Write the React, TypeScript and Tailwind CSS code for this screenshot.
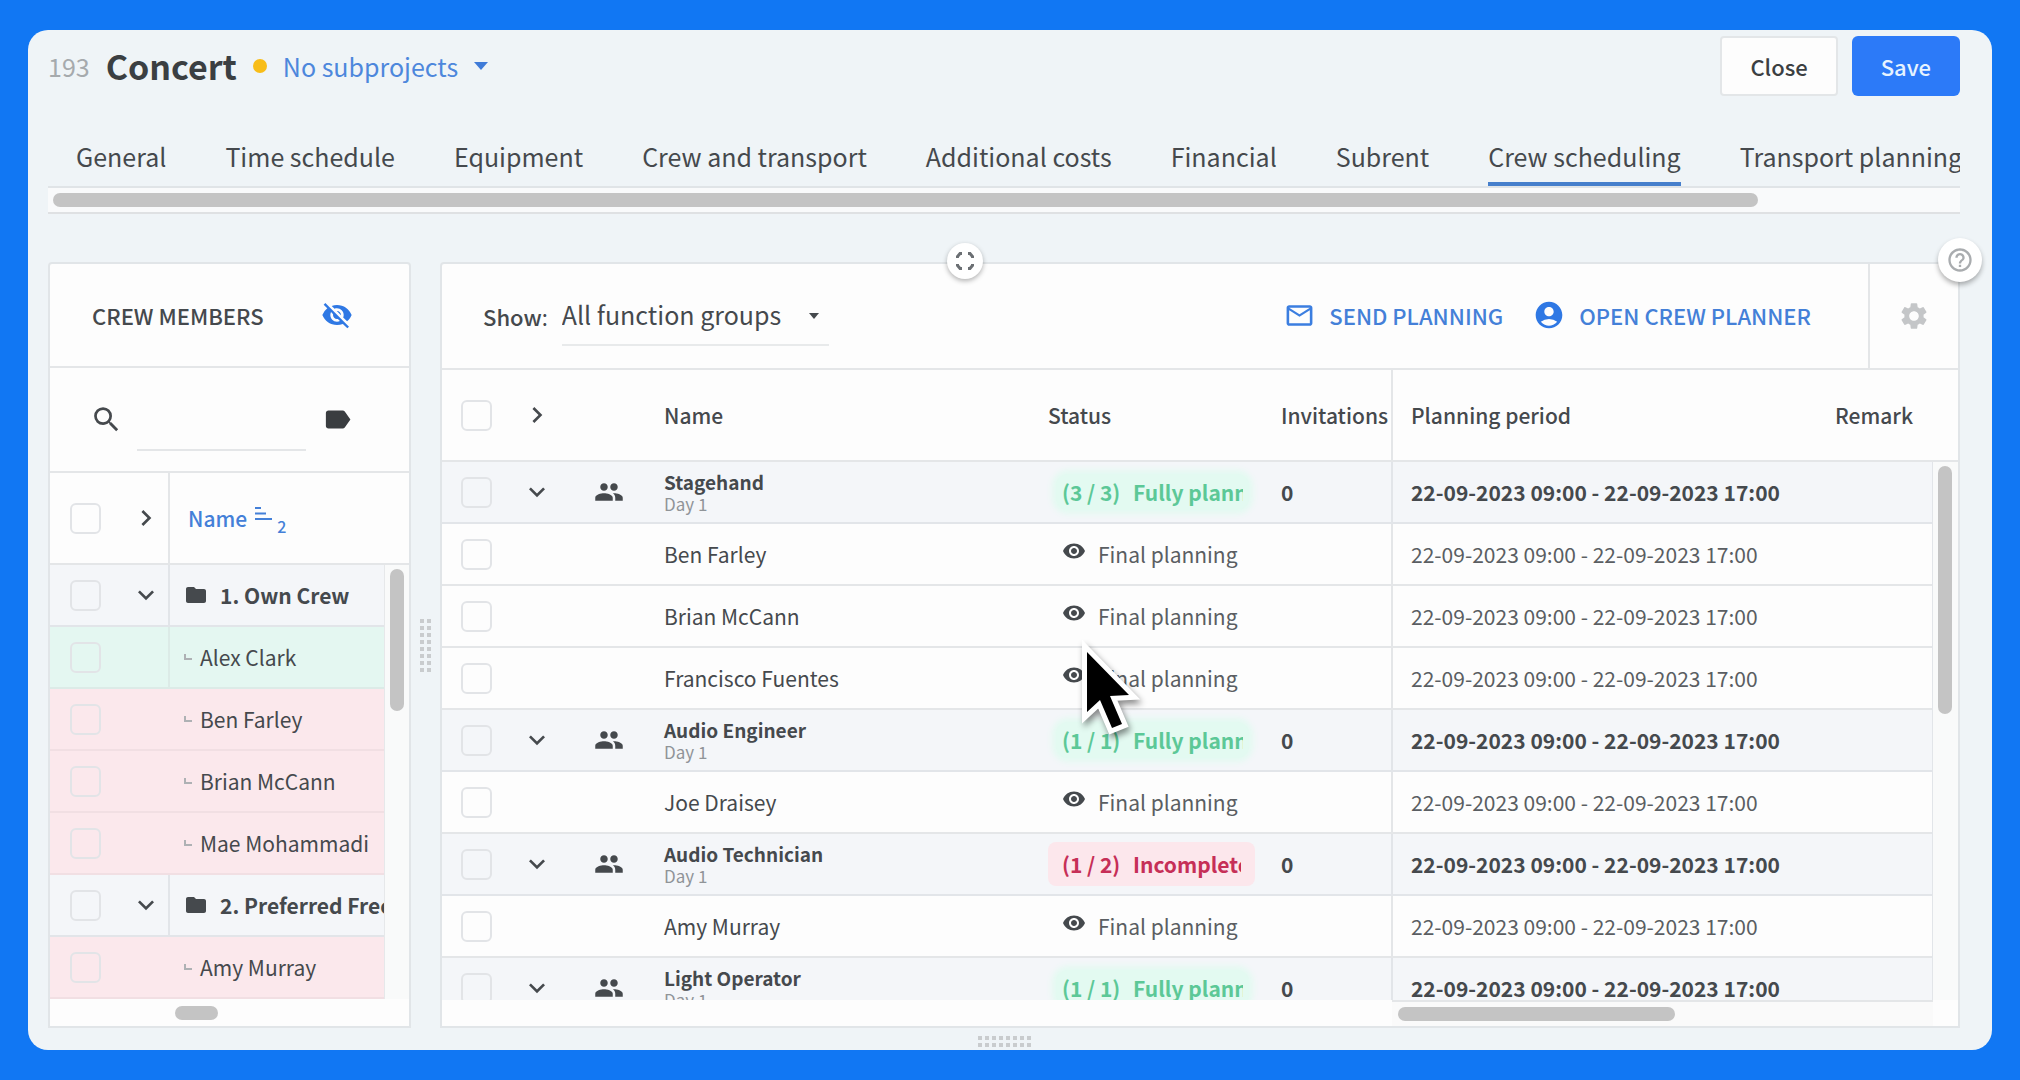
import type { ReactNode } from 'react';
import {
  MdAccountCircle,
  MdChevronRight,
  MdExpandMore,
  MdFolder,
  MdHelpOutline,
  MdLabel,
  MdMailOutline,
  MdPeople,
  MdSearch,
  MdSettings,
  MdVisibility,
  MdVisibilityOff,
} from 'react-icons/md';

const TABS = [
  'General',
  'Time schedule',
  'Equipment',
  'Crew and transport',
  'Additional costs',
  'Financial',
  'Subrent',
  'Crew scheduling',
  'Transport planning',
];

type CrewRow = { kind: 'folder' | 'free' | 'busy'; name: string };

const CREW: CrewRow[] = [
  { kind: 'folder', name: '1. Own Crew' },
  { kind: 'free', name: 'Alex Clark' },
  { kind: 'busy', name: 'Ben Farley' },
  { kind: 'busy', name: 'Brian McCann' },
  { kind: 'busy', name: 'Mae Mohammadi' },
  { kind: 'folder', name: '2. Preferred Freelancers' },
  { kind: 'busy', name: 'Amy Murray' },
];

type PlanRow =
  | { kind: 'group'; name: string; count: string; label: string; complete: boolean }
  | { kind: 'person'; name: string };

const PLAN: PlanRow[] = [
  { kind: 'group', name: 'Stagehand', count: '(3 / 3)', label: 'Fully planned', complete: true },
  { kind: 'person', name: 'Ben Farley' },
  { kind: 'person', name: 'Brian McCann' },
  { kind: 'person', name: 'Francisco Fuentes' },
  { kind: 'group', name: 'Audio Engineer', count: '(1 / 1)', label: 'Fully planned', complete: true },
  { kind: 'person', name: 'Joe Draisey' },
  { kind: 'group', name: 'Audio Technician', count: '(1 / 2)', label: 'Incomplete', complete: false },
  { kind: 'person', name: 'Amy Murray' },
  { kind: 'group', name: 'Light Operator', count: '(1 / 1)', label: 'Fully planned', complete: true },
];

const PERIOD = '22-09-2023 09:00 - 22-09-2023 17:00';

function Check({ label }: { label: string }) {
  return (
    <input
      type="checkbox"
      aria-label={label}
      className="block size-[31px] appearance-none rounded-md border-2 border-[#e2e4e7]"
    />
  );
}

function IconButton({ label, children }: { label: string; children: ReactNode }) {
  return (
    <button type="button" aria-label={label} className="mx-auto flex items-center justify-center">
      {children}
    </button>
  );
}

function Grip({ className, count }: { className: string; count: number }) {
  return (
    <div className={className}>
      {Array.from({ length: count }, (_, i) => (
        <span key={i} className="size-1 bg-[#c9ccce]" />
      ))}
    </div>
  );
}

function SortIcon() {
  return (
    <svg width="18" height="16" viewBox="0 0 18 16" fill="none" stroke="#4480d8" strokeWidth="2" aria-hidden="true">
      <path d="M0 2h6M0 7.5h11M0 13h17" />
    </svg>
  );
}

function BranchIcon() {
  return (
    <svg width="8" height="7" viewBox="0 0 8 7" fill="none" stroke="#aeb1b4" strokeWidth="2" aria-hidden="true">
      <path d="M1 0v5h7" />
    </svg>
  );
}

function FullscreenIcon() {
  return (
    <svg width="20" height="20" viewBox="0 0 20 20" fill="none" stroke="#6b6f73" strokeWidth="3" aria-hidden="true">
      <path d="M2.5 7V5.500L5 2.500H7M13 2.500H15L17.500 5.500V7M17.500 13V14.500L15 17.500H13M7 17.500H5L2.500 14.500V13" />
    </svg>
  );
}

function PointerArrow() {
  return (
    <svg
      width="70"
      height="104"
      viewBox="0 0 70 104"
      className="absolute left-8 top-[-24px] z-10 drop-shadow-[2px_4px_3px_rgba(0,0,0,0.45)]"
      aria-hidden="true"
    >
      <path
        d="M7 14L49 57L30 58L42 86L32 90L20 62L7 74Z"
        fill="#000"
        stroke="#fff"
        strokeWidth="10"
        strokeMiterlimit="8"
        paintOrder="stroke"
      />
    </svg>
  );
}

function CrewPanel() {
  return (
    <section className="flex w-[363px] shrink-0 flex-col overflow-hidden rounded-t-sm border-2 border-[#e1e5e8] bg-[#fdfdfd]">
      <div className="flex h-[104px] shrink-0 items-center justify-between border-b-2 border-[#e4e6e8] pl-[42px] pr-14">
        <h2 className="text-[22px]/8 font-medium">CREW MEMBERS</h2>
        <button type="button" aria-label="Hide unavailable crew">
          <MdVisibilityOff className="size-8 text-[#2f78e4]" />
        </button>
      </div>
      <div className="flex h-[105px] shrink-0 items-center border-b-2 border-[#e4e6e8] pl-10 pr-14">
        <MdSearch className="size-[33px] shrink-0" />
        <input
          type="text"
          aria-label="Search crew"
          className="mb-5 ml-3.5 h-12 w-0 flex-1 self-end border-b-2 border-[#e4e6e8] bg-transparent text-xl outline-none"
        />
        <button type="button" aria-label="Filter by tag" className="ml-4">
          <MdLabel className="size-[31px] text-[#3a3d40]" />
        </button>
      </div>
      <div className="min-h-0 flex-1 overflow-hidden">
        <table className="w-full table-fixed border-separate border-spacing-0 text-left">
          <colgroup>
            <col className="w-[73px]" />
            <col className="w-[47px]" />
            <col />
            <col className="w-[25px]" />
          </colgroup>
          <thead>
            <tr className="h-[92px]">
              <th className="border-b-2 border-[#e4e6e8] pl-5">
                <Check label="Select all crew" />
              </th>
              <th className="border-b-2 border-r-2 border-[#e4e6e8]">
                <IconButton label="Expand all">
                  <MdChevronRight className="size-8" />
                </IconButton>
              </th>
              <th colSpan={2} className="border-b-2 border-[#e4e6e8] pl-[18px] font-medium">
                <button type="button" className="flex items-center text-[21px]/8 text-[#4480d8]">
                  Name
                  <span className="mb-2 ml-2">
                    <SortIcon />
                  </span>
                  <span className="ml-1 mt-4 text-base/4">2</span>
                </button>
              </th>
            </tr>
          </thead>
          <tbody>
            {CREW.map((row, i) => {
              const folder = row.kind === 'folder';
              const tone =
                row.kind === 'folder'
                  ? 'border-[#e2e5e9] bg-[#f4f6f9]'
                  : row.kind === 'free'
                    ? 'border-[#dcebe7] bg-[#e4f7f1]'
                    : 'border-[#f1dfe3] bg-[#fbe8ec]';
              const split = row.kind === 'busy' ? 'border-b-2' : 'border-b-2 border-r-2';
              return (
                <tr key={row.name} className="h-[62px]">
                  <td className={`border-b-2 pl-5 ${tone}`}>
                    <Check label={`Select ${row.name}`} />
                  </td>
                  <td className={`${split} ${tone}`}>
                    {folder && (
                      <IconButton label={`Collapse ${row.name}`}>
                        <MdExpandMore className="size-8" />
                      </IconButton>
                    )}
                  </td>
                  <td className={`overflow-hidden whitespace-nowrap border-b-2 pl-[14px] text-[21px]/8 ${tone}`}>
                    {folder ? (
                      <span className="flex items-center gap-3 font-bold">
                        <MdFolder className="size-6 shrink-0" />
                        {row.name}
                      </span>
                    ) : (
                      <span className="flex items-center gap-2">
                        <BranchIcon />
                        {row.name}
                      </span>
                    )}
                  </td>
                  {i === 0 && (
                    <td rowSpan={CREW.length} className="border-l border-[#e6e8ea] bg-[#f9fafa] pt-1 align-top">
                      <div className="mx-auto h-[142px] w-3.5 rounded-full bg-[#c4c4c4]" />
                    </td>
                  )}
                </tr>
              );
            })}
          </tbody>
        </table>
      </div>
      <div className="flex h-[26px] shrink-0 items-center">
        <div className="ml-[125px] h-3.5 w-[43px] rounded-full bg-[#c4c4c4]" />
      </div>
    </section>
  );
}

function StatusBadge({ count, label, complete }: { count: string; label: string; complete: boolean }) {
  const tone = complete
    ? 'ml-2 h-9 w-[193px] rounded-xl px-1.5 bg-[#e3faf1] text-[#5cc897] shadow-[0_0_6px_4px_#e3faf1]'
    : 'h-11 w-[207px] rounded-lg px-3.5 bg-[#fce7ec] text-[#c62f57]';
  return (
    <span className={`flex items-center ${tone}`}>
      <span className="w-[71px] shrink-0">{count}</span>
      <span className="overflow-hidden whitespace-nowrap">{label}</span>
    </span>
  );
}

function PlanningTable() {
  return (
    <table className="w-full table-fixed border-separate border-spacing-0 text-left text-[21px]/8">
      <colgroup>
        <col className="w-[70px]" />
        <col className="w-[50px]" />
        <col className="w-[94px]" />
        <col />
        <col className="w-[233px]" />
        <col className="w-[112px]" />
        <col className="w-[442px]" />
        <col className="w-[97px]" />
        <col className="w-[26px]" />
      </colgroup>
      <thead>
        <tr className="h-[92px] [&>th]:border-b-2 [&>th]:border-[#e4e6e8] [&>th]:font-medium">
          <th className="pl-[19px]">
            <Check label="Select all functions" />
          </th>
          <th>
            <IconButton label="Expand all">
              <MdChevronRight className="size-8" />
            </IconButton>
          </th>
          <th />
          <th className="pl-2">Name</th>
          <th>Status</th>
          <th className="border-r-2">Invitations</th>
          <th className="pl-[18px]">Planning period</th>
          <th colSpan={2}>Remark</th>
        </tr>
      </thead>
      <tbody>
        {PLAN.map((row, i) => {
          const group = row.kind === 'group';
          return (
            <tr
              key={i}
              className={
                group
                  ? 'h-[62px] font-bold [&>td]:border-b-2 [&>td]:border-[#e2e5e9] [&>td]:bg-[#f4f6f9]'
                  : 'h-[62px] [&>td]:border-b-2 [&>td]:border-[#e4e6e8]'
              }
            >
              <td className="pl-[19px]">
                <Check label={`Select ${row.name}`} />
              </td>
              <td>
                {group && (
                  <IconButton label={`Collapse ${row.name}`}>
                    <MdExpandMore className="size-8" />
                  </IconButton>
                )}
              </td>
              <td>{group && <MdPeople className="mx-auto size-[30px]" />}</td>
              <td className="pl-2">
                {group ? (
                  <>
                    <p className="text-[19px]/6">{row.name}</p>
                    <p className="text-[17px]/5 font-normal text-[#909498]">Day 1</p>
                  </>
                ) : (
                  row.name
                )}
              </td>
              <td>
                {row.kind === 'group' ? (
                  <StatusBadge count={row.count} label={row.label} complete={row.complete} />
                ) : (
                  <span className="relative flex items-center gap-3 pl-3.5">
                    <MdVisibility className="mb-1.5 size-6" />
                    <span className="text-[#5a5e62]">Final planning</span>
                    {i === 3 && <PointerArrow />}
                  </span>
                )}
              </td>
              <td className="border-r-2">{group && '0'}</td>
              <td className={group ? 'whitespace-nowrap pl-[18px]' : 'whitespace-nowrap pl-[18px] text-[#5a5e62]'}>
                {PERIOD}
              </td>
              <td />
              {i === 0 && (
                <td rowSpan={PLAN.length} className="border-l border-[#e6e8ea] !bg-[#f9fafa] pt-1 align-top">
                  <div className="mx-auto h-[248px] w-3.5 rounded-full bg-[#c4c4c4]" />
                </td>
              )}
            </tr>
          );
        })}
      </tbody>
    </table>
  );
}

function PlanningPanel() {
  return (
    <section className="relative flex min-w-0 flex-1 flex-col rounded-t-sm border-2 border-[#e1e5e8] bg-[#fdfdfd]">
      <div className="flex h-[106px] shrink-0 border-b-2 border-[#e4e6e8]">
        <div className="flex flex-1 items-center pl-[41px]">
          <label htmlFor="group" className="text-[22px]/8 font-medium">
            Show<span className="font-normal">:</span>
          </label>
          <div className="relative ml-3.5">
            <select
              id="group"
              className="h-[60px] w-[267px] appearance-none border-b-2 border-[#e8eaeb] bg-transparent text-[25px] outline-none"
            >
              <option>All function groups</option>
            </select>
            <svg width="10" height="6" viewBox="0 0 10 6" className="absolute right-2.5 top-[27px]" aria-hidden="true">
              <path d="M0 0h10L5 6z" fill="#45494d" />
            </svg>
          </div>
        </div>
        <div className="flex items-center gap-[30px] pr-[57px] text-[22px]/8 font-medium text-[#4480d8]">
          <button type="button" className="flex items-center gap-3.5 pb-0.5">
            <MdMailOutline className="size-[31px] text-[#3b7ee0]" />
            SEND PLANNING
          </button>
          <button type="button" className="flex items-center gap-3.5 pb-0.5">
            <MdAccountCircle className="size-8 text-[#2f78e4]" />
            OPEN CREW PLANNER
          </button>
        </div>
        <div className="flex w-[90px] items-center border-l-2 border-[#e4e6e8]">
          <IconButton label="Settings">
            <MdSettings className="size-8 text-[#c4c6c8]" />
          </IconButton>
        </div>
      </div>
      <div className="min-h-0 flex-1 overflow-hidden">
        <PlanningTable />
      </div>
      <div className="flex h-[26px] shrink-0 justify-end">
        <div className="mr-[25px] flex w-[541px] items-center border-t-2 border-[#e4e6e8] bg-[#fafafa] pl-1.5">
          <div className="h-3.5 w-[277px] rounded-full bg-[#c4c4c4]" />
        </div>
      </div>
      <button
        type="button"
        aria-label="Full screen"
        className="absolute left-[505px] top-[-21px] flex size-9 items-center justify-center rounded-full bg-white shadow-[0_2px_5px_rgba(0,0,0,0.3)]"
      >
        <FullscreenIcon />
      </button>
      <button
        type="button"
        aria-label="Help"
        className="absolute right-[-24px] top-[-26px] flex size-11 items-center justify-center rounded-full bg-white shadow-[0_3px_5px_rgba(0,0,0,0.3)]"
      >
        <MdHelpOutline className="size-7 text-[#a9acaf]" />
      </button>
    </section>
  );
}

export default function App() {
  return (
    <div className="flex h-screen flex-col bg-[#1177f3] px-7 py-[30px] font-['Noto_Sans_CJK_SC',sans-serif] text-[#45494d]">
      <div className="flex min-h-0 flex-1 flex-col overflow-hidden rounded-[20px] bg-[#eff4f7] pl-5 pr-8">
        <header className="flex h-[66px] shrink-0 items-center pt-1.5">
          <span className="text-[25px]/8 text-[#a6aaad]">193</span>
          <h1 className="ml-4 text-[34px]/10 font-bold text-[#3b3f42]">Concert</h1>
          <span className="ml-4 size-3.5 rounded-full bg-[#f8bd18]" />
          <button type="button" className="ml-4 flex items-center gap-4 text-[25px]/8 text-[#4d87dc]">
            No subprojects
            <svg width="14" height="8" viewBox="0 0 14 8" aria-hidden="true">
              <path d="M0 0h14L7 8z" fill="#3f7bd8" />
            </svg>
          </button>
          <div className="ml-auto flex gap-3.5 text-[22px]/8 font-medium">
            <button type="button" className="h-[60px] rounded-sm border-2 border-[#e3e6e8] bg-[#fdfdfd] px-7 text-[#3b3f42]">
              Close
            </button>
            <button type="button" className="h-[60px] rounded-md bg-[#2c7af8] px-[29px] text-[#e6f3ff]">
              Save
            </button>
          </div>
        </header>
        <nav className="flex h-[92px] shrink-0 items-end gap-[59px] overflow-hidden border-b-2 border-[#e0e4e7] pl-7">
          {TABS.map((tab) => (
            <a
              key={tab}
              href="#"
              className={
                tab === 'Crew scheduling'
                  ? 'shrink-0 border-b-4 border-[#467fcc] pb-2 text-[25px]/9'
                  : 'shrink-0 border-b-4 border-transparent pb-2 text-[25px]/9'
              }
            >
              {tab}
            </a>
          ))}
        </nav>
        <div className="flex h-[26px] shrink-0 items-center border-b-2 border-[#dfe1e3] bg-[#f9fafb] pl-[5px]">
          <div className="h-3.5 w-[1705px] rounded-full bg-[#c4c4c4]" />
        </div>
        <main className="mt-12 flex min-h-0 flex-1">
          <CrewPanel />
          <div className="flex w-[29px] shrink-0 items-center justify-center">
            <Grip className="grid grid-cols-2 gap-[3px]" count={16} />
          </div>
          <PlanningPanel />
        </main>
        <footer className="flex h-[22px] shrink-0 items-center justify-center pt-1">
          <Grip className="grid grid-cols-8 gap-[3px]" count={16} />
        </footer>
      </div>
    </div>
  );
}
